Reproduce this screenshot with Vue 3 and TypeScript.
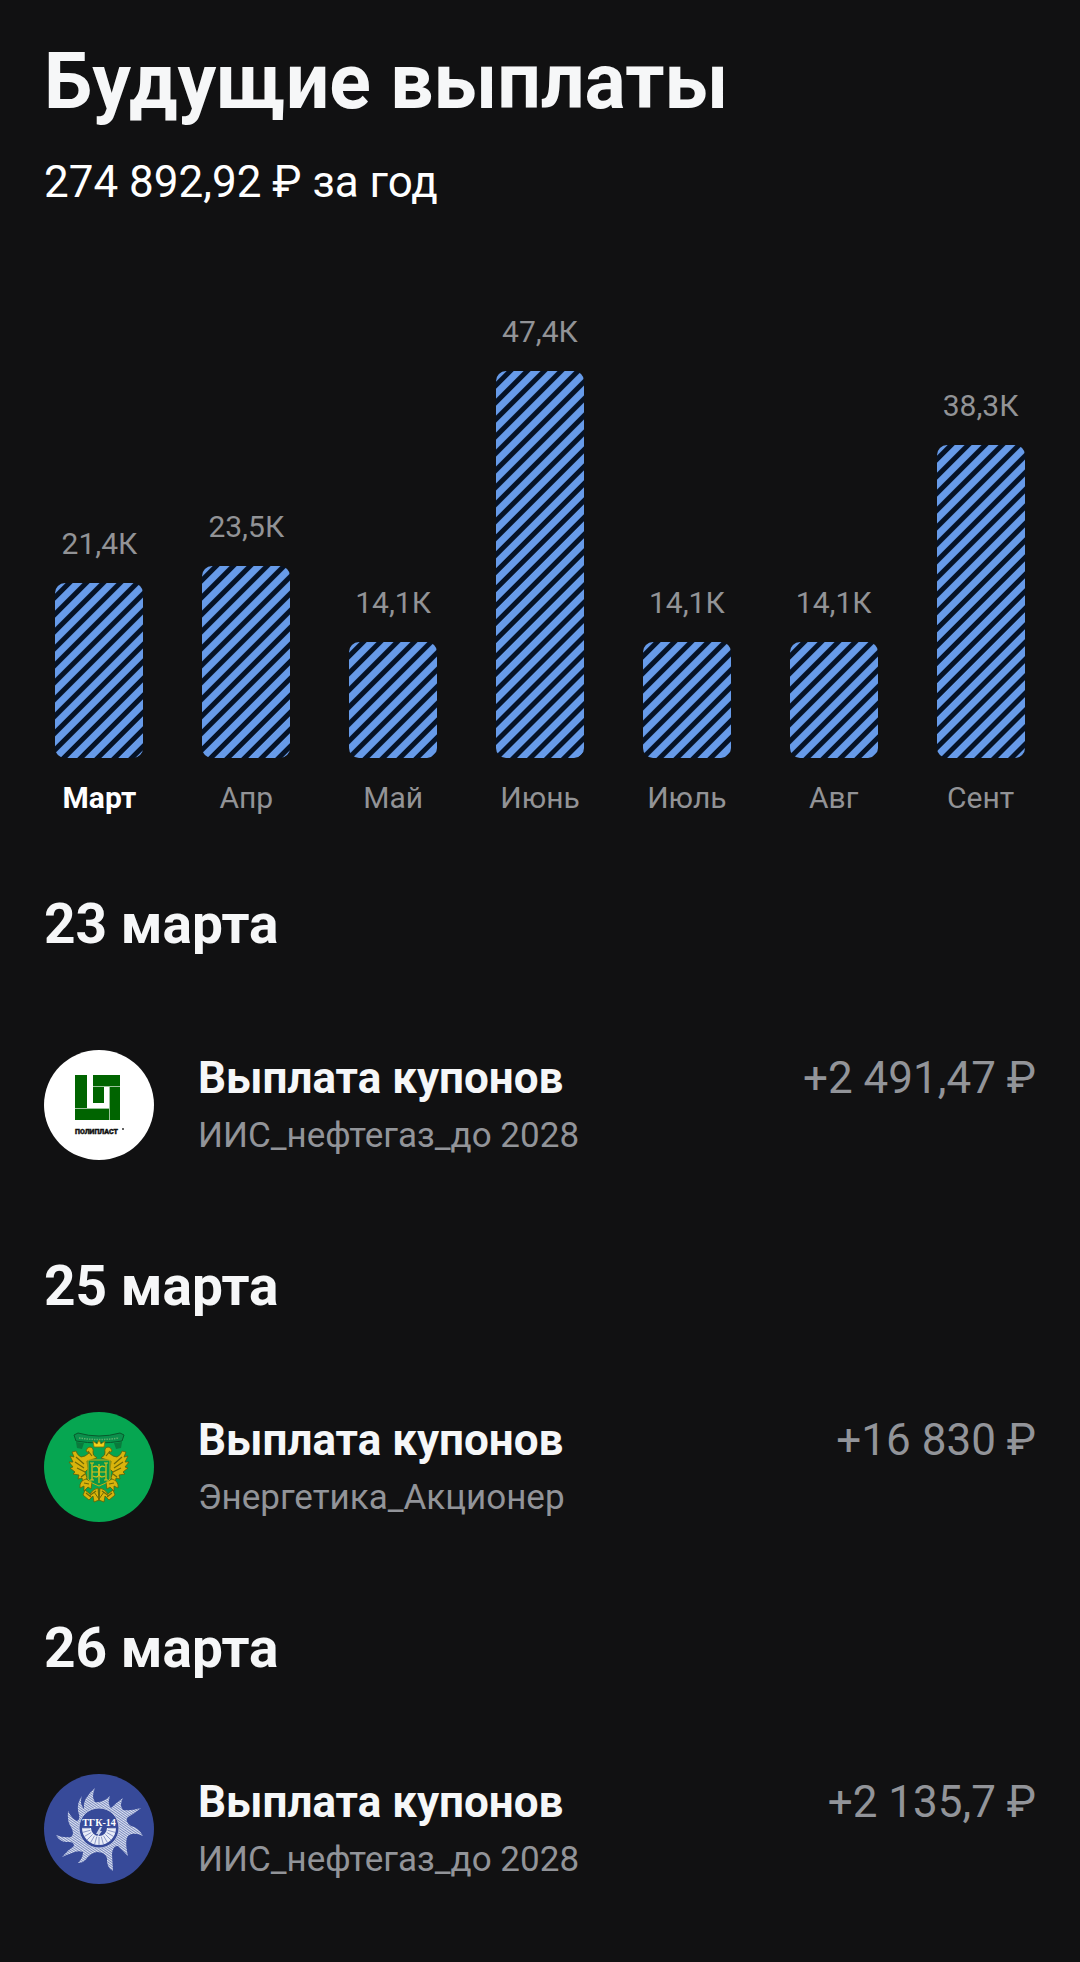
<script setup lang="ts">
interface Month {
  name: string
  label: string
  amount: number
  current?: boolean
}

interface Payout {
  date: string
  title: string
  account: string
  sum: string
  logo: 'polyplast' | 'eagle' | 'tgk'
}

const CHART_HEIGHT = 387

const months: Month[] = [
  { name: 'Март', label: '21,4К', amount: 21430, current: true },
  { name: 'Апр', label: '23,5К', amount: 23510 },
  { name: 'Май', label: '14,1К', amount: 14180 },
  { name: 'Июнь', label: '47,4К', amount: 47390 },
  { name: 'Июль', label: '14,1К', amount: 14180 },
  { name: 'Авг', label: '14,1К', amount: 14180 },
  { name: 'Сент', label: '38,3К', amount: 38300 },
]

const peak = Math.max(...months.map((m) => m.amount))
const barHeight = (m: Month): string => `${Math.round((m.amount / peak) * CHART_HEIGHT)}px`

const payouts: Payout[] = [
  { date: '23 марта', title: 'Выплата купонов', account: 'ИИС_нефтегаз_до 2028', sum: '+2 491,47 ₽', logo: 'polyplast' },
  { date: '25 марта', title: 'Выплата купонов', account: 'Энергетика_Акционер', sum: '+16 830 ₽', logo: 'eagle' },
  { date: '26 марта', title: 'Выплата купонов', account: 'ИИС_нефтегаз_до 2028', sum: '+2 135,7 ₽', logo: 'tgk' },
]

// Ring of turbine blades around the lower half of the hub
const blades = Array.from({ length: 13 }, (_, i) => {
  const a = (Math.PI * i) / 12
  const c = Math.cos(a)
  const s = Math.sin(a)
  return `M${(55 + 9 * c).toFixed(1)} ${(54 + 9 * s).toFixed(1)}L${(55 + 17 * c).toFixed(1)} ${(54 + 17 * s).toFixed(1)}`
}).join('')
</script>

<template>
  <main class="page">
    <header class="head">
      <h1 class="title">Будущие выплаты</h1>
      <p class="total">274 892,92 ₽ за год</p>
    </header>

    <section class="chart" aria-label="Выплаты по месяцам">
      <div v-for="m in months" :key="m.name" class="month" :class="{ current: m.current }">
        <span class="value">{{ m.label }}</span>
        <div class="bar" :style="{ height: barHeight(m) }"></div>
        <span class="name">{{ m.name }}</span>
      </div>
    </section>

    <section v-for="p in payouts" :key="p.date" class="day">
      <h2 class="date">{{ p.date }}</h2>
      <article class="payout">
        <svg v-if="p.logo === 'polyplast'" class="logo" viewBox="0 0 110 110" aria-hidden="true">
          <circle cx="55" cy="55" r="55" fill="#fff" />
          <path d="M49 36.5H76M65.5 37V70M31 58.5H65" stroke="#9cc39c" stroke-width="1" />
          <g fill="#006400">
            <path d="M31 25H43V58H31Z" />
            <path d="M49 25H76V36H49Z" />
            <path d="M49 37H60V53H49Z" />
            <path d="M66 37H76V70H66Z" />
            <path d="M31 59H65V70H31Z" />
          </g>
          <path d="M60.500 37H65V58H43V25H49V53H60.500Z" fill="#fff" />
          <text x="31" y="84" class="wordmark">ПОЛИПЛАСТ</text>
          <circle cx="79" cy="79" r="1" fill="#333" />
        </svg>

        <svg v-else-if="p.logo === 'eagle'" class="logo" viewBox="0 0 110 110" aria-hidden="true">
          <circle cx="55" cy="55" r="55" fill="#06a651" />
          <path d="M30 23L34 21Q55 27 76 21L80 23L78 29Q55 33 32 29Z" fill="#0b8f4b" stroke="#075a2c" stroke-width="1" />
          <path d="M35 26Q55 29 75 26" fill="none" stroke="#5fae6a" stroke-width="1.5" stroke-dasharray="1.5 1" />
          <path d="M32 30L40 31L38 37L33 36ZM78 30L70 31L72 37L77 36Z" fill="#0a7a3c" />
          <g id="eagle-half">
            <g fill="#d9b40c" stroke="#5f6108" stroke-width=".8">
              <path d="M53 46Q48 43 49 40Q50 36 46 35Q43 35 42 39L45 41Q41 45 37 45Q33 43 32 39L28 40L30 45L26 44L29 50L25 50L29 55L26 56L31 60L29 62L35 63L34 67L38 66L39 71L43 66L41 60L44 57L43 49Z" />
              <path d="M42 67Q35 69 36 76L40 74L40 79L44 75L47 77L48 70Z" />
              <path d="M54 76Q49 77 46 82L41 78L39 83L45 88L49 84L50 90L55 88Z" />
            </g>
            <path d="M32 45L40 52M31 50L40 56M33 56L41 60M37 65L41 62M44 39L48 44M40 71L45 72M45 84L52 79M42 81L47 85" fill="none" stroke="#6d6906" stroke-width="1.2" />
          </g>
          <use href="#eagle-half" transform="matrix(-1 0 0 1 110 0)" />
          <path d="M50 35L49 29L53 32L55 28L57 32L61 29L60 35Z" fill="#f2d21b" stroke="#7b7209" stroke-width=".8" />
          <path d="M44 48H66V67Q62 72 55 74Q48 72 44 67Z" fill="#07984a" stroke="#c9ad13" stroke-width="1" />
          <g fill="none" stroke="#dec11a" stroke-width="1.2">
            <path d="M48 51V68M62 51V68M46 51H50M60 51H64M46 68H50M60 68H64M48 60H62M55 52V71" />
            <path d="M49 55Q55 52 55 60Q55 67 49 64M61 55Q55 52 55 60Q55 67 61 64" />
          </g>
          <path d="M55 77V89M50 80L55 87L60 80" fill="none" stroke="#6d6906" stroke-width="1" />
        </svg>

        <svg v-else class="logo" viewBox="0 0 110 110" aria-hidden="true">
          <defs>
            <pattern id="hatch" width="2" height="2" patternUnits="userSpaceOnUse" patternTransform="rotate(35)">
              <rect width="2" height="2" fill="#5365a9" />
              <rect width="2" height="1.3" fill="#dfe5f4" />
            </pattern>
          </defs>
          <circle cx="55" cy="55" r="55" fill="#374a99" />
          <path
            fill="url(#hatch)"
            d="M40 35Q38 25 51 14Q47 23 51 28Q59 29 66 22Q63 30 67 34Q72 29 79 24Q75 31 79 36Q87 37 97 34Q90 40 84 43Q80 47 87 52Q94 53 99 62Q91 58 85 61Q80 65 84 82Q78 76 74 72Q69 71 68 80L69 97Q62 93 63 84Q61 78 53 78Q47 79 43 84Q40 89 34 89Q39 84 39 78Q34 76 28 79Q22 81 18 83Q24 76 30 72Q30 68 25 68Q16 69 12 61Q19 64 27 63Q31 60 27 53Q23 48 24 37Q28 45 33 47Q37 45 34 37Q33 28 38 22Q35 29 40 35Z"
          />
          <circle cx="55" cy="54" r="20" fill="#374a99" stroke="#b9c3e2" stroke-width="1" />
          <path d="M38 54A17 17 0 0 0 72 54H63A8 8 0 0 1 47 54Z" fill="#e9edf8" />
          <path :d="blades" fill="none" stroke="#6576b3" stroke-width=".7" />
          <path d="M56 53L52 60L54 60L53 64L58 57L56 57L58 53Z" fill="#c9d2ea" />
          <text x="55" y="52" text-anchor="middle" class="tgk">ТГК-14</text>
        </svg>

        <div class="info">
          <h3 class="name">{{ p.title }}</h3>
          <p class="account">{{ p.account }}</p>
        </div>
        <p class="sum">{{ p.sum }}</p>
      </article>
    </section>
  </main>
</template>

<style>
body {
  margin: 0;
  background: #111112;
}
</style>

<style scoped>
.page {
  box-sizing: border-box;
  min-height: 100vh;
  padding: 36px 0 77px;
  background: #111112;
  color: #f6f7f8;
  font-family: Roboto, 'Liberation Sans', sans-serif;
}

h1,
h2,
h3,
p {
  margin: 0;
}

.head {
  padding: 0 44px;
}

.title {
  font-size: 77px;
  line-height: 92px;
  font-weight: 700;
}

.total {
  margin-top: 28px;
  font-size: 44px;
  line-height: 52px;
  color: #fff;
}

.chart {
  display: grid;
  grid-template-columns: repeat(7, 1fr);
  align-items: end;
  margin-top: 106px;
  padding: 0 26px;
  color: #929396;
  font-size: 30px;
  line-height: 36px;
}

.month {
  display: flex;
  flex-direction: column;
  align-items: center;
}

.bar {
  width: 88px;
  margin: 21px 0 22px;
  border-radius: 10px;
  background: repeating-linear-gradient(135deg, #051226 0, #679be9 1px 7px, #051226 8px 12px);
}

.month.current .name {
  color: #fff;
  font-weight: 700;
}

.day {
  padding: 0 44px;
  margin-top: 93px;
}

.chart + .day {
  margin-top: 75px;
}

.date {
  font-size: 55px;
  line-height: 66px;
  font-weight: 700;
}

.payout {
  display: flex;
  align-items: flex-start;
  margin-top: 93px;
}

.logo {
  flex: none;
  width: 110px;
  height: 110px;
  margin-right: 44px;
}

.info {
  flex: 1;
  min-width: 0;
}

.info .name {
  font-size: 44px;
  line-height: 56px;
  font-weight: 700;
}

.account {
  margin-top: 8px;
  color: #929499;
  font-size: 35px;
  line-height: 44px;
}

.sum {
  color: #929499;
  font-size: 44px;
  line-height: 56px;
  white-space: nowrap;
}

.wordmark {
  font: 900 7px Roboto, sans-serif;
  fill: #111;
  stroke: #111;
  stroke-width: 0.4px;
}

.tgk {
  font: 700 10px 'Liberation Serif', serif;
  fill: #fff;
}
</style>
